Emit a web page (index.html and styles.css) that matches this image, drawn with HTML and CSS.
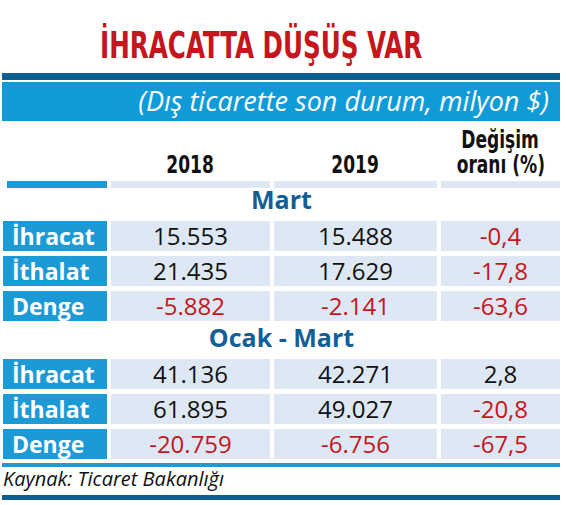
FILE: index.html
```html
<!DOCTYPE html>
<html lang="tr">
<head>
  <meta charset="UTF-8">
  <title>İhracatta düşüş var</title>
  <link rel="stylesheet" href="styles.css">
</head>
<body>
  <div class="graphic">
    <h1 class="title"><span>İHRACATTA DÜŞÜŞ VAR</span></h1>
    <div class="topbar"></div>
    <div class="subtitle">(Dış ticarette son durum, milyon $)</div>

    <div class="table">
      <div class="row head">
        <div class="hcell"><span class="bar blue"></span></div>
        <div class="hcell"><span class="htext">2018</span><span class="bar"></span></div>
        <div class="hcell"><span class="htext">2019</span><span class="bar"></span></div>
        <div class="hcell"><span class="htext">Değişim</span><span class="htext">oranı (%)</span><span class="bar"></span></div>
      </div>

      <div class="section">Mart</div>
      <div class="row">
        <div class="label">İhracat</div>
        <div class="cell">15.553</div>
        <div class="cell">15.488</div>
        <div class="cell neg">-0,4</div>
      </div>
      <div class="row">
        <div class="label">İthalat</div>
        <div class="cell">21.435</div>
        <div class="cell">17.629</div>
        <div class="cell neg">-17,8</div>
      </div>
      <div class="row">
        <div class="label">Denge</div>
        <div class="cell neg">-5.882</div>
        <div class="cell neg">-2.141</div>
        <div class="cell neg">-63,6</div>
      </div>

      <div class="section second">Ocak - Mart</div>
      <div class="row">
        <div class="label">İhracat</div>
        <div class="cell">41.136</div>
        <div class="cell">42.271</div>
        <div class="cell">2,8</div>
      </div>
      <div class="row">
        <div class="label">İthalat</div>
        <div class="cell">61.895</div>
        <div class="cell">49.027</div>
        <div class="cell neg">-20,8</div>
      </div>
      <div class="row">
        <div class="label">Denge</div>
        <div class="cell neg">-20.759</div>
        <div class="cell neg">-6.756</div>
        <div class="cell neg">-67,5</div>
      </div>
    </div>

    <div class="footline"></div>
    <div class="source">Kaynak: Ticaret Bakanlığı</div>
    <div class="bottomline"></div>
  </div>
</body>
</html>
```

FILE: styles.css
```css
body {
  margin: 0;
  background: #fff;
  font-family: 'Open Sans', 'DejaVu Sans', sans-serif;
  color: #111;
}
.graphic {
  width: 558px;
  margin-left: 2px;
}
.title {
  margin: 0;
  padding: 25px 0 0 98px;
  font-family: 'DejaVu Sans Condensed', 'DejaVu Sans', sans-serif;
  font-size: 37px;
  line-height: 41px;
  font-weight: bold;
  color: #c4161c;
  white-space: nowrap;
}
.title span {
  display: inline-block;
  transform: scaleX(0.74);
  transform-origin: left center;
}
.topbar {
  margin-top: 7px;
  height: 7px;
  background: #0c5e97;
}
.subtitle {
  margin-top: 2px;
  height: 39px;
  background: #0f9bd8;
  color: #fff;
  font-style: italic;
  font-size: 27px;
  line-height: 38px;
  text-align: right;
  padding-right: 11px;
  white-space: nowrap;
}
.table {
  display: flex;
  flex-direction: column;
  gap: 5px;
  padding-left: 1px;
}
.row {
  display: grid;
  grid-template-columns: 104px 159px 163px 119px;
  column-gap: 4px;
  height: 30px;
}
.row.head {
  height: auto;
  margin-top: 7px;
  align-items: end;
}
.hcell {
  display: flex;
  flex-direction: column;
  align-items: center;
}
.htext {
  display: block;
  font-family: 'DejaVu Sans Condensed', 'DejaVu Sans', sans-serif;
  font-weight: bold;
  font-size: 24px;
  line-height: 25px;
  height: 25px;
  text-align: center;
  color: #111;
  transform: scaleX(0.79);
  white-space: nowrap;
}
.bar {
  display: block;
  align-self: stretch;
  height: 7px;
  margin-top: 3px;
  background: #dde8f4;
}
.bar.blue {
  margin-left: 4px;
  background: #1b9ad6;
}
.section {
  font-size: 25px;
  font-weight: bold;
  color: #135e96;
  text-align: center;
  line-height: 13px;
  padding-bottom: 10px;
}
.section.second {
  padding-top: 5px;
}
.label {
  background: #1b9ad6;
  color: #fff;
  font-weight: bold;
  font-size: 23px;
  line-height: 30px;
  padding-left: 9px;
}
.cell {
  background: #dde8f4;
  font-size: 24px;
  font-weight: 500;
  line-height: 30px;
  text-align: center;
}
.cell.neg {
  color: #c5161d;
}
.footline {
  margin-top: 4px;
  height: 4px;
  background: #1b9ad6;
}
.source {
  padding: 1px 0 0 1px;
  font-style: italic;
  font-size: 20px;
  line-height: 22px;
}
.bottomline {
  margin-top: 5px;
  height: 5px;
  background: #0c5e97;
}
```
